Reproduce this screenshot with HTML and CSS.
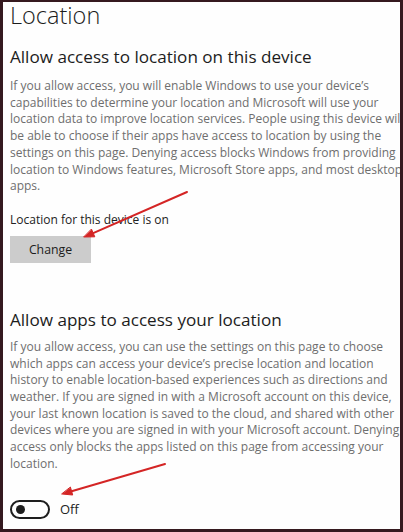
FILE: index.html
```html
<!DOCTYPE html>
<html>
<head>
<meta charset="utf-8">
<link rel="stylesheet" href="styles.css">
</head>
<body>
<div class="frame">
  <h1 class="title">Location</h1>
  <section class="sec sec-first">
    <h2 class="heading">Allow access to location on this device</h2>
    <p class="desc">If you allow access, you will enable Windows to use your device’s capabilities to determine your location and Microsoft will use your location data to improve location services. People using this device will be able to choose if their apps have access to location by using the settings on this page. Denying access blocks Windows from providing location to Windows features, Microsoft Store apps, and most desktop apps.</p>
    <p class="status">Location for this device is on</p>
    <button class="btn">Change</button>
  </section>
  <section class="sec sec-second">
    <h2 class="heading">Allow apps to access your location</h2>
    <p class="desc">If you allow access, you can use the settings on this page to choose which apps can access your device’s precise location and location history to enable location-based experiences such as directions and weather. If you are signed in with a Microsoft account on this device, your last known location is saved to the cloud, and shared with other devices where you are signed in with your Microsoft account. Denying access only blocks the apps listed on this page from accessing your location.</p>
    <div class="toggle-row">
      <span class="toggle"><span class="knob"></span></span>
      <span class="toggle-label">Off</span>
    </div>
  </section>
  <svg class="arrows" width="403" height="532" viewBox="0 0 403 532">
    <g stroke="#d42525" stroke-width="2" stroke-linecap="round" fill="#d42525">
      <line x1="187" y1="192" x2="93.2" y2="233.1"/>
      <polygon points="84,237 94.8,236.8 91.6,229.4" stroke-width="1" stroke-linejoin="round"/>
      <line x1="165" y1="464" x2="71.6" y2="491.2"/>
      <polygon points="62,494 72.7,495 70.5,487.4" stroke-width="1" stroke-linejoin="round"/>
    </g>
  </svg>
</div>
</body>
</html>
```
FILE: styles.css
```css
html, body {
  margin: 0;
  padding: 0;
  background: #ffffff;
}
.frame {
  position: relative;
  box-sizing: border-box;
  width: 403px;
  height: 532px;
  border: 3px solid #35191f;
  border-top-width: 2px;
  background: #fefefe;
  padding: 0 0 0 7px;
  font-family: "Open Sans", "Noto Sans", sans-serif;
  color: #1c1c1c;
  overflow: hidden;
}
.title {
  margin: 0;
  font-size: 23.5px;
  font-weight: 300;
  line-height: 26px;
}
.sec-first {
  margin-top: 18px;
}
.sec-second {
  margin-top: 46px;
}
.heading {
  margin: 0;
  font-size: 17.1px;
  font-weight: 400;
  line-height: 22px;
}
.desc {
  margin: 8px 0 0 0;
  width: 394px;
  font-size: 12px;
  line-height: 16.7px;
  color: #6e6e6e;
}
.sec-first .desc {
  margin-top: 10px;
}
.status {
  margin: 17px 0 0 0;
  font-size: 12px;
  line-height: 16px;
  color: #222;
}
.btn {
  display: block;
  margin: 8px 0 0 0;
  width: 81px;
  height: 27px;
  border: none;
  background: #cccccc;
  font-family: inherit;
  font-size: 12.3px;
  color: #1c1c1c;
  padding: 0;
}
.toggle-row {
  margin-top: 27px;
  display: flex;
  align-items: center;
  gap: 10px;
}
.toggle {
  box-sizing: border-box;
  width: 40px;
  height: 19px;
  border: 2px solid #1e1e1e;
  border-radius: 10px;
  display: flex;
  align-items: center;
  padding-left: 4px;
}
.knob {
  width: 9px;
  height: 9px;
  border-radius: 50%;
  background: #1e1e1e;
}
.toggle-label {
  font-size: 13px;
  line-height: 19px;
  color: #222;
}
.arrows {
  position: absolute;
  left: -3px;
  top: -2px;
  pointer-events: none;
}
```
